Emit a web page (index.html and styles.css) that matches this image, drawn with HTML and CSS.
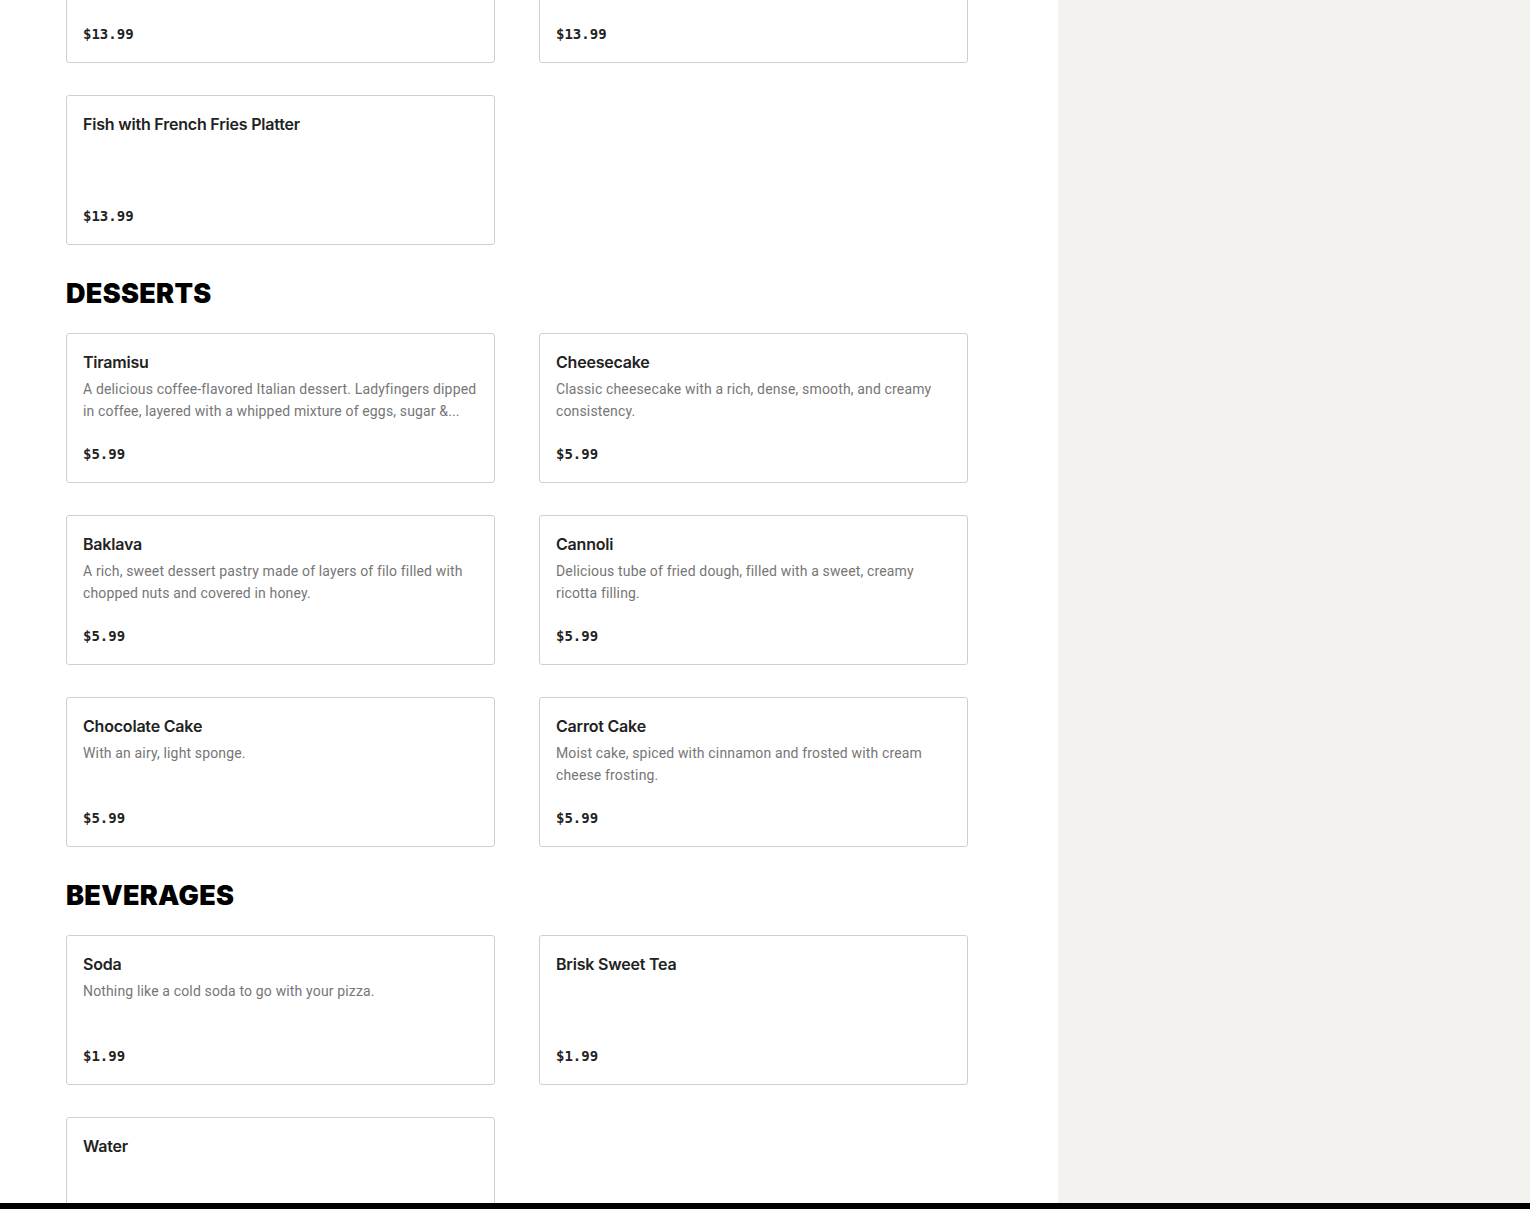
FILE: index.html
```html
<!DOCTYPE html>
<html lang="en">
<head>
  <meta charset="UTF-8" />
  <meta name="viewport" content="width=device-width, initial-scale=1.0"/>
  <title>Menu</title>
  <link rel="stylesheet" href="styles.css">
</head>
<body>
  <div class="page">
    <main class="menu">
      <section class="section section-scrolled">
        <div class="item-grid">
          <div class="item-card">
            <div class="item-name">Shrimp Platter</div>
            <div class="item-desc"></div>
            <div class="item-price">$13.99</div>
          </div>
          <div class="item-card">
            <div class="item-name">Chicken Tenders Platter</div>
            <div class="item-desc"></div>
            <div class="item-price">$13.99</div>
          </div>
          <div class="item-card">
            <div class="item-name">Fish with French Fries Platter</div>
            <div class="item-desc"></div>
            <div class="item-price">$13.99</div>
          </div>
        </div>
      </section>

      <section class="section">
        <h2 class="section-title">DESSERTS</h2>
        <div class="item-grid">
          <div class="item-card">
            <div class="item-name">Tiramisu</div>
            <div class="item-desc">A delicious coffee-flavored Italian dessert. Ladyfingers dipped in coffee, layered with a whipped mixture of eggs, sugar &amp;...</div>
            <div class="item-price">$5.99</div>
          </div>
          <div class="item-card">
            <div class="item-name">Cheesecake</div>
            <div class="item-desc">Classic cheesecake with a rich, dense, smooth, and creamy consistency.</div>
            <div class="item-price">$5.99</div>
          </div>
          <div class="item-card">
            <div class="item-name">Baklava</div>
            <div class="item-desc">A rich, sweet dessert pastry made of layers of filo filled with chopped nuts and covered in honey.</div>
            <div class="item-price">$5.99</div>
          </div>
          <div class="item-card">
            <div class="item-name">Cannoli</div>
            <div class="item-desc">Delicious tube of fried dough, filled with a sweet, creamy ricotta filling.</div>
            <div class="item-price">$5.99</div>
          </div>
          <div class="item-card">
            <div class="item-name">Chocolate Cake</div>
            <div class="item-desc">With an airy, light sponge.</div>
            <div class="item-price">$5.99</div>
          </div>
          <div class="item-card">
            <div class="item-name">Carrot Cake</div>
            <div class="item-desc">Moist cake, spiced with cinnamon and frosted with cream cheese frosting.</div>
            <div class="item-price">$5.99</div>
          </div>
        </div>
      </section>

      <section class="section">
        <h2 class="section-title">BEVERAGES</h2>
        <div class="item-grid">
          <div class="item-card">
            <div class="item-name">Soda</div>
            <div class="item-desc">Nothing like a cold soda to go with your pizza.</div>
            <div class="item-price">$1.99</div>
          </div>
          <div class="item-card">
            <div class="item-name">Brisk Sweet Tea</div>
            <div class="item-desc"></div>
            <div class="item-price">$1.99</div>
          </div>
          <div class="item-card">
            <div class="item-name">Water</div>
            <div class="item-desc"></div>
            <div class="item-price">$1.99</div>
          </div>
        </div>
      </section>
    </main>
    <aside class="sidebar"></aside>
  </div>
  <div class="bottom-bar"></div>
</body>
</html>
```

FILE: styles.css
```css
* {
  margin: 0;
  padding: 0;
  box-sizing: border-box;
}
body {
  font-family: 'Inter', 'Roboto', sans-serif;
  background-color: #fff;
  color: #222;
  height: 1209px;
  overflow: hidden;
}
.page {
  display: flex;
  height: 1209px;
}
.menu {
  width: 1058px;
  padding: 0 90px 0 66px;
  background: #fff;
}
.sidebar {
  flex: 1;
  background-color: #f3f2ee;
}
.section {
  margin-bottom: 32px;
}
.section-scrolled {
  margin-top: -87px;
}
.section-title {
  font-size: 27px;
  line-height: 33px;
  font-weight: 900;
  letter-spacing: 0.3px;
  color: #000;
  margin-bottom: 23px;
}
.item-grid {
  display: grid;
  grid-template-columns: 429px 429px;
  column-gap: 44px;
  row-gap: 32px;
}
.item-card {
  height: 150px;
  border: 1px solid #cfcfcf;
  border-radius: 3px;
  padding: 16px 16px 0 16px;
}
.item-name {
  font-size: 16px;
  line-height: 24px;
  font-weight: 600;
  letter-spacing: -0.2px;
  color: #222;
}
.item-desc {
  margin-top: 4px;
  height: 44px;
  font-family: 'Roboto', sans-serif;
  font-size: 14px;
  line-height: 22px;
  letter-spacing: 0.15px;
  color: #767676;
  display: -webkit-box;
  -webkit-line-clamp: 2;
  -webkit-box-orient: vertical;
  overflow: hidden;
}
.item-price {
  margin-top: 22px;
  font-family: 'DejaVu Sans Mono', monospace;
  font-size: 14px;
  line-height: 20px;
  font-weight: bold;
  color: #222;
}
.bottom-bar {
  position: fixed;
  left: 0;
  right: 0;
  bottom: 0;
  height: 6px;
  background: #000;
}
```
